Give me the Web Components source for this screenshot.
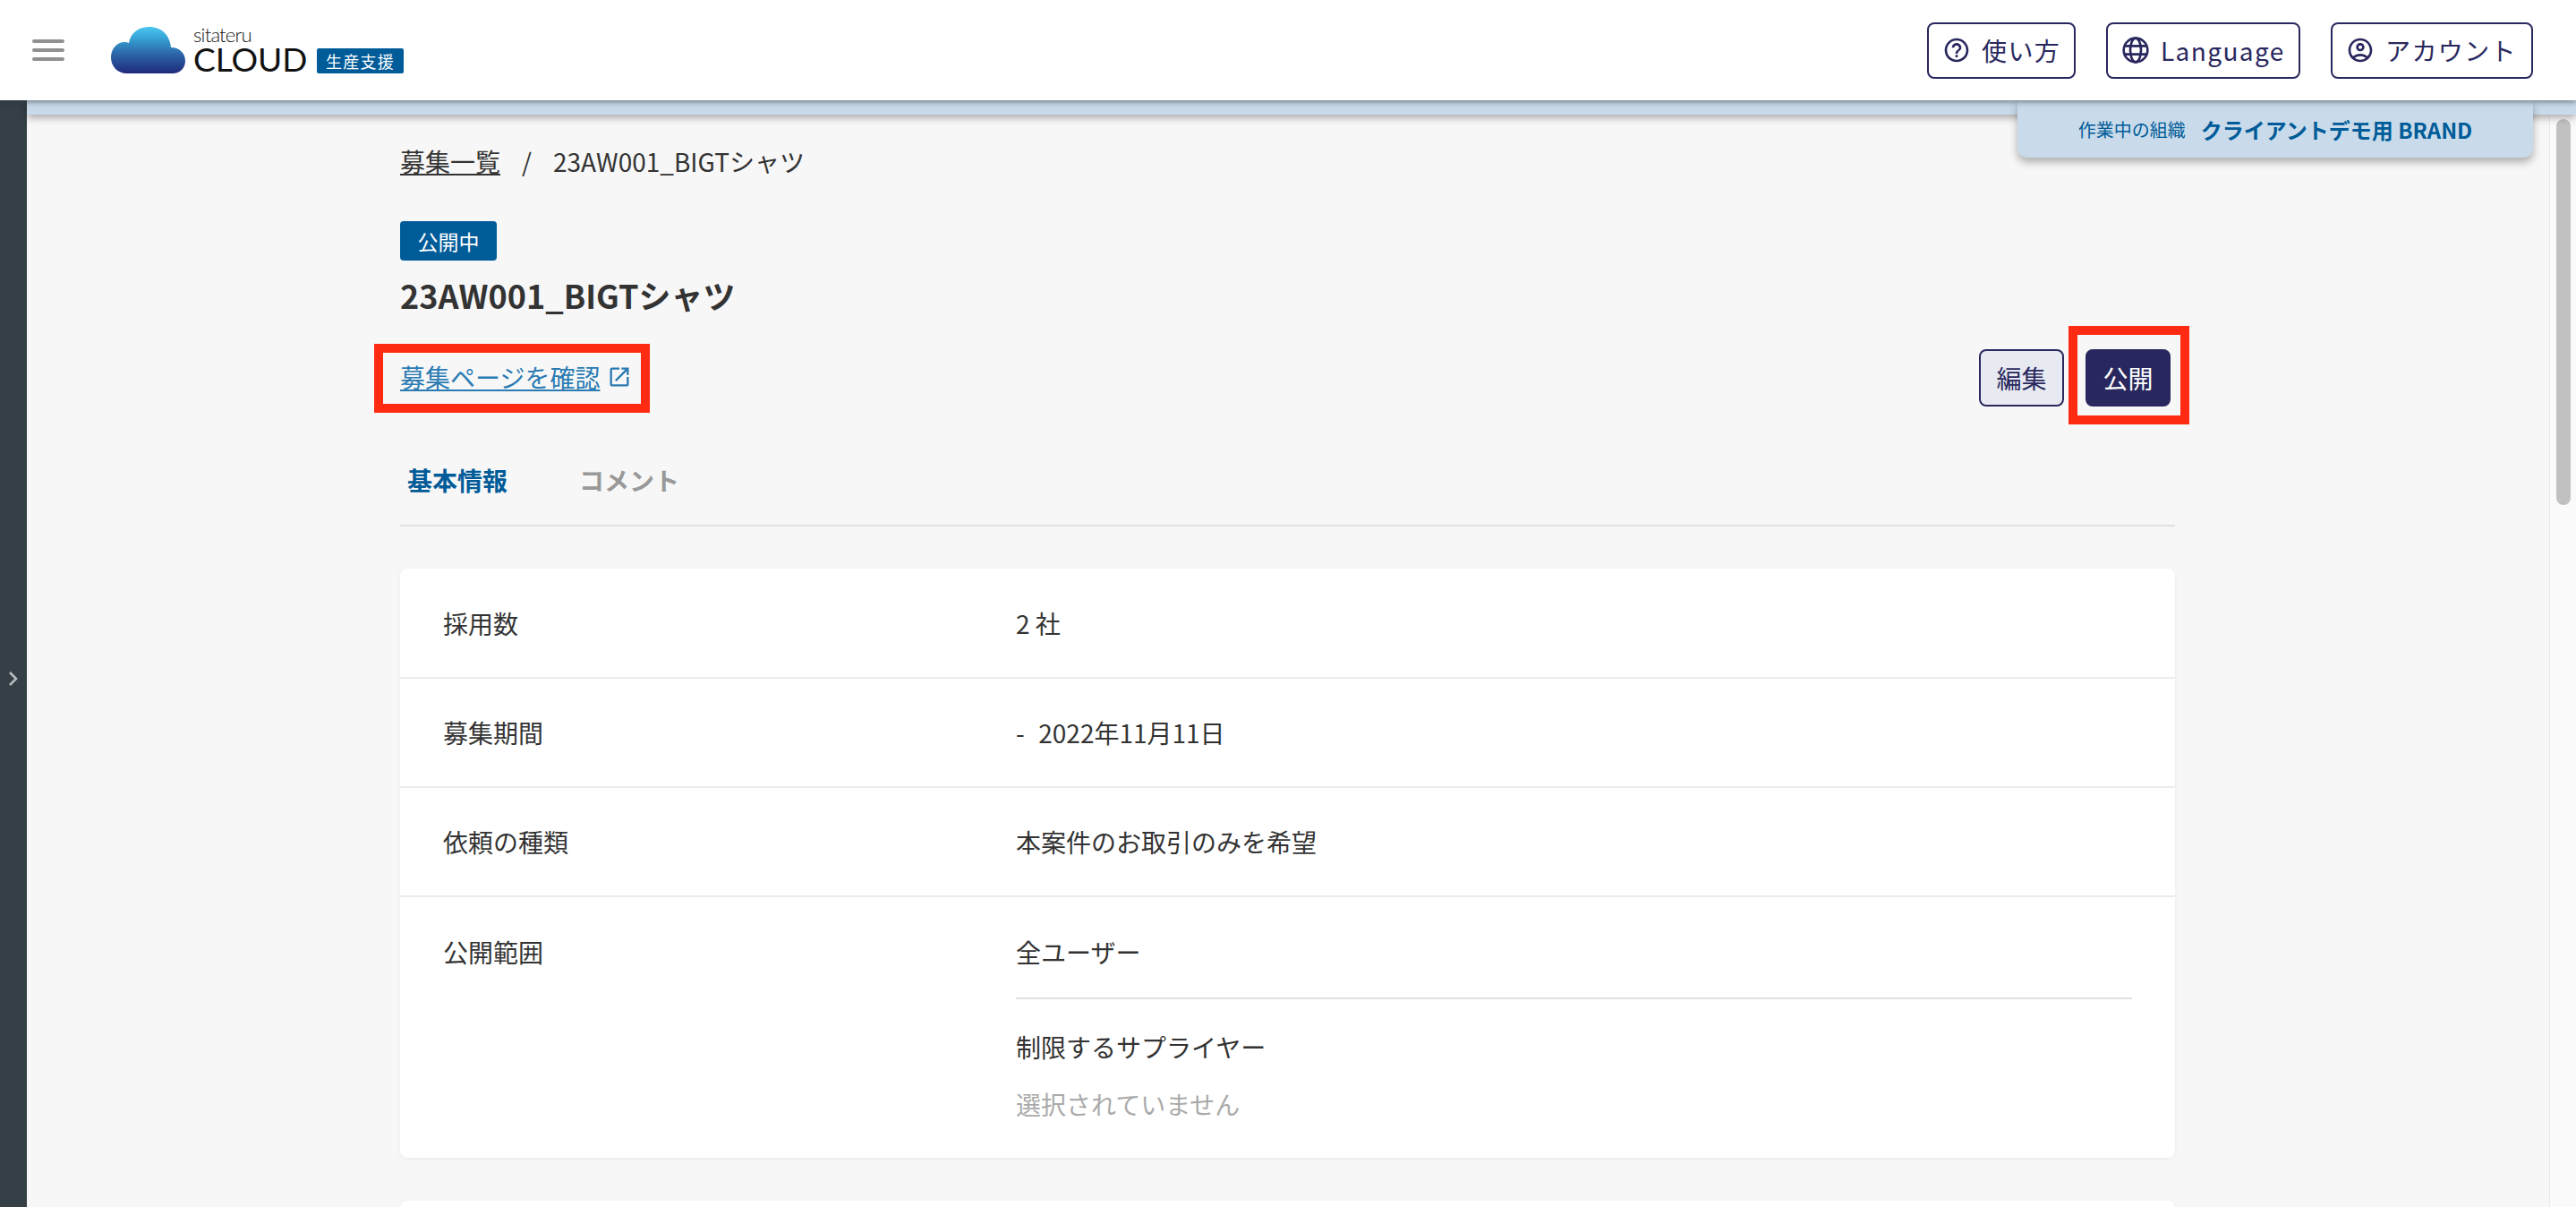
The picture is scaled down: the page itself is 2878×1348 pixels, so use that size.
<!DOCTYPE html>
<html lang="ja">
<head>
<meta charset="utf-8">
<title>23AW001_BIGTシャツ</title>
<style>
  html, body { margin: 0; height: 1348px; overflow: hidden; }
  body {
    background: #f7f7f7;
    color: #333;
    font-family: "Noto Sans CJK JP", "Noto Sans", sans-serif;
    font-size: 28px;
  }
</style>
</head>
<body>
<app-shell>
  <app-header slot="header"></app-header>
  <org-band slot="band" label="作業中の組織" name="クライアントデモ用 BRAND"></org-band>
  <recruit-page>
    <bread-crumb slot="crumb" link="募集一覧" current="23AW001_BIGTシャツ"></bread-crumb>
    <status-badge slot="badge">公開中</status-badge>
    <h1 slot="title" style="margin:0;font-size:36px;line-height:52px;font-weight:700">23AW001_BIGTシャツ</h1>
    <page-actions slot="actions"></page-actions>
    <tab-bar slot="tabs"></tab-bar>
    <info-card slot="cards">
      <info-row label="採用数" first>2 社</info-row>
      <info-row label="募集期間"><span style="margin-right:3px">-&nbsp;</span> 2022年11月11日</info-row>
      <info-row label="依頼の種類">本案件のお取引のみを希望</info-row>
      <info-row label="公開範囲" last>
        <scope-detail></scope-detail>
      </info-row>
    </info-card>
    <info-card slot="cards" style="height:120px"></info-card>
  </recruit-page>
</app-shell>

<script>
class AppShell extends HTMLElement {
    constructor(){
        super();
        this.attachShadow({mode: 'open'}).innerHTML = `
        <style>
        :host { display: flex; flex-direction: column; height: 1348px; }
        .below { flex: 1; display: flex; min-height: 0; }
        .side {
            width: 30px; flex: none;
            background: #343f46;
            display: flex; align-items: center; justify-content: center;
            padding-top: 56px; box-sizing: border-box;
        }
        .right { flex: 1; display: flex; flex-direction: column; min-width: 0; }
        .body { flex: 1; display: flex; min-height: 0; overflow: hidden; }
        .main { flex: 1; min-width: 0; overflow: hidden; }
        .track {
            width: 30px; flex: none; box-sizing: border-box;
            background: #fafafa;
            border-left: 1px solid #e8e8e8;
            padding: 5px 6px 0 7px;
        }
        .thumb { height: 431px; background: #c1c1c1; border-radius: 8px; }
        ::slotted([slot=header]) { position: relative; z-index: 3; }
        ::slotted([slot=band]) { position: relative; z-index: 2; }
        </style>
        <slot name="header"></slot>
        <div class="below">
            <div class="side">
                <svg width="12" height="18" viewBox="0 0 12 18" fill="none" stroke="#b9bdc0" stroke-width="2.6"><path d="M2 2l7 7-7 7"/></svg>
            </div>
            <div class="right">
                <slot name="band"></slot>
                <div class="body">
                    <div class="main"><slot></slot></div>
                    <div class="track"><div class="thumb"></div></div>
                </div>
            </div>
        </div>`;
    }
}

class NavButton extends HTMLElement {
    constructor(){
        super();
        this.attachShadow({mode: 'open'}).innerHTML = `
        <style>
        :host {
            display: inline-flex; align-items: center; box-sizing: border-box;
            height: 63px; padding-left: 15px; gap: 12px;
            border: 2px solid #29285e; border-radius: 8px;
            color: #29285e; font-size: 28px; letter-spacing: 1.4px; background: #fff;
            white-space: nowrap;
        }
        ::slotted(svg) { width: 32px; height: 32px; flex: none; }
        </style>
        <slot name="icon"></slot><slot></slot>`;
    }
}

class AppHeader extends HTMLElement {
    constructor(){
        super();
        this.attachShadow({mode: 'open'}).innerHTML = `
        <style>
        :host {
            display: flex; align-items: center; box-sizing: border-box;
            height: 112px; padding: 0 48px 0 36px;
            background: #fff;
            box-shadow: 0 2px 6px rgba(40,50,60,.55);
        }
        .burger { width: 36px; display: flex; flex-direction: column; gap: 6px; margin-right: 52px; }
        .burger i { display: block; height: 4px; background: #909090; border-radius: 2px; }
        .logo { display: flex; align-items: flex-end; height: 52px; }
        .cloud { width: 83px; height: 52px; margin-right: 9px; }
        .word { display: flex; flex-direction: column; width: 138px; margin-bottom: 2px; font-family: "Lato", sans-serif; color: #111; }
        .word b { font-weight: 300; font-size: 22px; line-height: 18px; height: 22px; letter-spacing: -.8px; }
        .word span { font-weight: 400; font-size: 37px; line-height: 28px; }
        .tag {
            width: 97px; height: 28px; background: #005b99; color: #fff; border-radius: 2px;
            font-size: 18px; line-height: 28px; text-align: center; letter-spacing: 1.2px;
        }
        .nav { margin-left: auto; display: flex; gap: 34px; }
        </style>
        <div class="burger"><i></i><i></i><i></i></div>
        <div class="logo">
            <svg class="cloud" viewBox="0 0 83 52">
                <defs><linearGradient id="c" x1="0" y1="0" x2="0" y2="1">
                    <stop offset="0" stop-color="#4cc6ee"/><stop offset=".22" stop-color="#37a6d8"/>
                    <stop offset=".6" stop-color="#2c64a6"/><stop offset="1" stop-color="#1f2a7c"/>
                </linearGradient></defs>
                <path fill="url(#c)" d="M18 52C7 52 0 44 0 34C0 24 7 17 15 17C17 17 19 17.500 20 18C22 7 30 0 43 0C56 0 66 9 67 23C76 23 83 29 83 38C83 46 77 52 69 52Z"/>
            </svg>
            <div class="word"><b>sitateru</b><span>CLOUD</span></div>
            <div class="tag">生産支援</div>
        </div>
        <div class="nav">
            <nav-button style="width:166px">
                <svg slot="icon" viewBox="0 0 24 24" fill="#29285e"><path d="M11 18h2v-2h-2v2zm1-16C6.480 2 2 6.480 2 12s4.480 10 10 10 10-4.480 10-10S17.520 2 12 2zm0 18c-4.410 0-8-3.590-8-8s3.590-8 8-8 8 3.590 8 8-3.590 8-8 8zm0-14c-2.210 0-4 1.790-4 4h2c0-1.100.9-2 2-2s2 .9 2 2c0 2-3 1.750-3 5h2c0-2.250 3-2.500 3-5 0-2.210-1.790-4-4-4z"/></svg>
                使い方
            </nav-button>
            <nav-button style="width:217px">
                <svg slot="icon" viewBox="0 0 24 24" fill="none" stroke="#29285e" stroke-width="2"><circle cx="12" cy="12" r="10"/><ellipse cx="12" cy="12" rx="4.500" ry="10"/><path d="M2.800 8.500h18.400M2.800 15.500h18.400"/></svg>
                Language
            </nav-button>
            <nav-button style="width:226px">
                <svg slot="icon" viewBox="0 0 24 24" fill="#29285e"><path d="M12 2C6.480 2 2 6.480 2 12s4.480 10 10 10 10-4.480 10-10S17.520 2 12 2zM7.350 18.500C8.660 17.560 10.260 17 12 17s3.340.56 4.650 1.500C15.340 19.440 13.740 20 12 20s-3.340-.56-4.650-1.500zm10.790-1.380C16.450 15.800 14.320 15 12 15s-4.450.8-6.140 2.120C4.700 15.730 4 13.950 4 12c0-4.420 3.580-8 8-8s8 3.580 8 8c0 1.950-.7 3.730-1.860 5.120z"/><path d="M12 6c-1.930 0-3.500 1.570-3.500 3.500S10.070 13 12 13s3.500-1.570 3.500-3.500S13.930 6 12 6zm0 5c-.83 0-1.500-.67-1.500-1.500S11.170 8 12 8s1.500.67 1.500 1.500S12.830 11 12 11z"/></svg>
                アカウント
            </nav-button>
        </div>`;
    }
}

class OrgBand extends HTMLElement {
    constructor(){
        super();
        this.attachShadow({mode: 'open'}).innerHTML = `
        <style>
        :host {
            display: block; position: relative; height: 16px;
            background: #c9dbea;
            box-shadow: 0 3px 10px rgba(0,0,0,.35);
        }
        .tab {
            position: absolute; top: 0; right: 48px; width: 576px; height: 64px; box-sizing: border-box;
            background: #c9dbea; border-radius: 0 0 10px 10px;
            box-shadow: 0 5px 10px rgba(0,0,0,.3);
            color: #005b99;
            display: flex; align-items: center; justify-content: center; gap: 17px;
        }
        .l { font-size: 20px; }
        .n { font-size: 24px; font-weight: 700; }
        </style>
        <div class="tab"><span class="l">${this.getAttribute('label')}</span><span class="n">${this.getAttribute('name')}</span></div>`;
    }
}

class RecruitPage extends HTMLElement {
    constructor(){
        super();
        this.attachShadow({mode: 'open'}).innerHTML = `
        <style>
        :host { display: block; width: 1983px; margin-left: 417px; padding-top: 30px; }
        .badge { margin-top: 45px; height: 44px; }
        .title { margin-top: 12px; }
        .actions { margin-top: 35px; }
        .tabs { margin-top: 62px; }
        .cards { display: flex; flex-direction: column; gap: 48px; margin-top: 47px; }
        </style>
        <slot name="crumb"></slot>
        <div class="badge"><slot name="badge"></slot></div>
        <div class="title"><slot name="title"></slot></div>
        <div class="actions"><slot name="actions"></slot></div>
        <div class="tabs"><slot name="tabs"></slot></div>
        <div class="cards"><slot name="cards"></slot></div>`;
    }
}

class BreadCrumb extends HTMLElement {
    constructor(){
        super();
        this.attachShadow({mode: 'open'}).innerHTML = `
        <style>
        :host { display: flex; align-items: center; height: 44px; font-size: 28px; color: #333; }
        a { color: inherit; text-decoration: underline; }
        .sep { margin: 0 24px; }
        </style>
        <a href="#">${this.getAttribute('link')}</a><span class="sep">/</span><span>${this.getAttribute('current')}</span>`;
    }
}

class StatusBadge extends HTMLElement {
    constructor(){
        super();
        this.attachShadow({mode: 'open'}).innerHTML = `
        <style>
        :host {
            display: inline-block; width: 108px; height: 44px; box-sizing: border-box;
            background: #005b99; color: #fff; border-radius: 4px;
            font-size: 23px; line-height: 44px; text-align: center;
        }
        </style>
        <slot></slot>`;
    }
}

class PageActions extends HTMLElement {
    constructor(){
        super();
        this.attachShadow({mode: 'open'}).innerHTML = `
        <style>
        :host { display: flex; align-items: center; justify-content: space-between; height: 64px; position: relative; }
        a { color: #2a7bb3; text-decoration: underline; font-size: 28px; }
        .link { display: flex; align-items: center; gap: 8px; position: relative; margin-top: -2px; }
        .link svg { width: 28px; height: 28px; }
        .mark { position: absolute; border: 10px solid #ff2a12; box-sizing: border-box; pointer-events: none; }
        .m1 { left: -29px; top: -17px; width: 308px; height: 77px; }
        .m2 { left: -21px; top: -28px; width: 135px; height: 110px; }
        .btns { display: flex; gap: 24px; margin-right: 5px; }
        .btn {
            position: relative;
            width: 95px; height: 64px; box-sizing: border-box; border-radius: 8px;
            display: flex; align-items: center; justify-content: center; font-size: 28px;
            border: 2px solid #29285e;
        }
        .ghost { background: #e8eaf1; color: #29285e; }
        .solid { background: #29285e; color: #fff; }
        </style>
        <div class="link">
            <a href="#">募集ページを確認</a>
            <svg viewBox="0 0 24 24" fill="#2a7bb3"><path d="M19 19H5V5h7V3H5c-1.110 0-2 .9-2 2v14c0 1.100.89 2 2 2h14c1.100 0 2-.9 2-2v-7h-2v7zM14 3v2h3.590l-9.830 9.830 1.410 1.410L19 6.410V10h2V3h-7z"/></svg>
            <div class="mark m1"></div>
        </div>
        <div class="btns">
            <div class="btn ghost">編集</div>
            <div class="btn solid">公開<div class="mark m2"></div></div>
        </div>`;
    }
}

class TabBar extends HTMLElement {
    constructor(){
        super();
        this.attachShadow({mode: 'open'}).innerHTML = `
        <style>
        :host {
            display: flex; gap: 80px; height: 72px; box-sizing: border-box; padding: 0 8px;
            border-bottom: 2px solid #e0e0e0; font-size: 28px; font-weight: 700; line-height: 40px;
        }
        .on { color: #005b99; }
        .off { color: #999; }
        </style>
        <div class="on">基本情報</div><div class="off">コメント</div>`;
    }
}

class InfoCard extends HTMLElement {
    constructor(){
        super();
        this.attachShadow({mode: 'open'}).innerHTML = `
        <style>
        :host { display: block; background: #fff; border-radius: 8px; box-shadow: 0 1px 4px rgba(0,0,0,.06); }
        </style>
        <slot></slot>`;
    }
}

class InfoRow extends HTMLElement {
    constructor(){
        super();
        this.attachShadow({mode: 'open'}).innerHTML = `
        <style>
        :host {
            display: flex; box-sizing: border-box; padding: 39px 48px 39px 48px;
            line-height: 42px; font-size: 28px; color: #333;
        }
        :host(:not([last])) { border-bottom: 2px solid #ececec; height: 122px; }
        :host([first]) { padding-top: 40px; height: 123px !important; }
        :host([last]) { padding-top: 40px; padding-bottom: 0; height: 291px; }
        .label { width: 640px; flex: none; }
        .value { flex: 1; min-width: 0; }
        </style>
        <div class="label">${this.getAttribute('label')}</div>
        <div class="value"><slot></slot></div>`;
    }
}

class ScopeDetail extends HTMLElement {
    constructor(){
        super();
        this.attachShadow({mode: 'open'}).innerHTML = `
        <style>
        :host { display: block; }
        .line { height: 2px; background: #e0e0e0; margin: 30px 0 32px; }
        .sub { margin-bottom: 22px; }
        .none { color: #aaa; }
        </style>
        <div>全ユーザー</div>
        <div class="line"></div>
        <div class="sub">制限するサプライヤー</div>
        <div class="none">選択されていません</div>`;
    }
}

customElements.define('app-shell', AppShell);
customElements.define('nav-button', NavButton);
customElements.define('app-header', AppHeader);
customElements.define('org-band', OrgBand);
customElements.define('recruit-page', RecruitPage);
customElements.define('bread-crumb', BreadCrumb);
customElements.define('status-badge', StatusBadge);
customElements.define('page-actions', PageActions);
customElements.define('tab-bar', TabBar);
customElements.define('info-card', InfoCard);
customElements.define('info-row', InfoRow);
customElements.define('scope-detail', ScopeDetail);
</script>
</body>
</html>
